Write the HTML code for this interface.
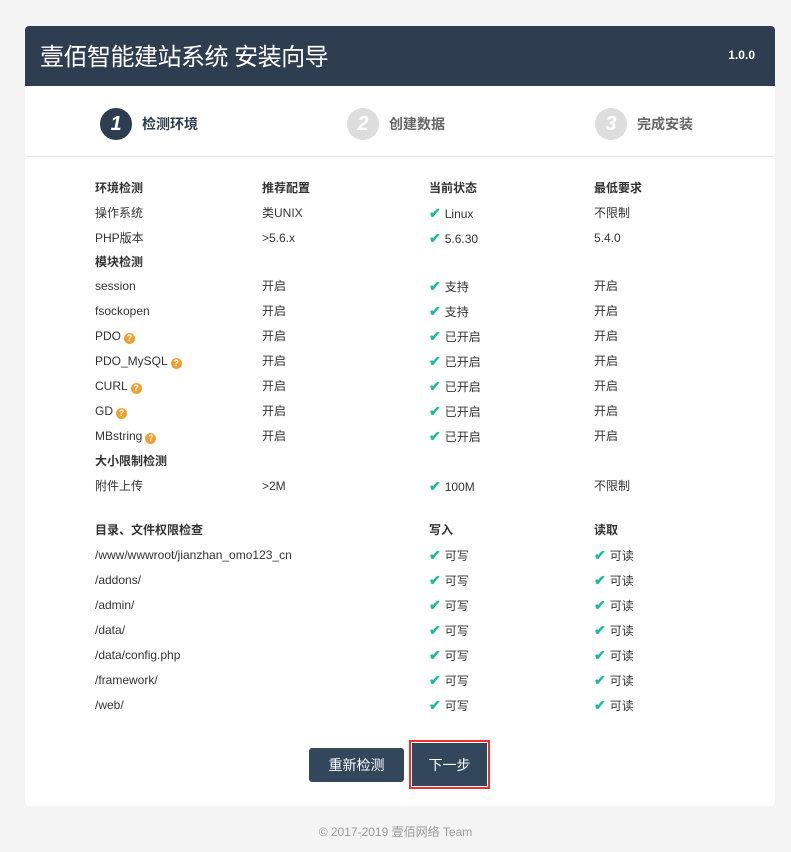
<!DOCTYPE html>
<html><head><meta charset="utf-8"><style>
*{margin:0;padding:0;box-sizing:border-box}
html,body{width:791px;height:852px;overflow:hidden}
body{background:#f4f4f4;font-family:"Liberation Sans","Noto Sans CJK SC",sans-serif;font-size:12px;color:#333;position:relative}
.card{position:absolute;left:25px;top:26px;width:750px;height:780px;background:#fff;border-radius:4px}
.hd{position:absolute;left:0;top:0;width:750px;height:60px;background:#2e3e50;border-radius:4px 4px 0 0;color:#fff}
.hd h1{position:absolute;left:15px;top:15px;font-size:24px;line-height:34px;font-weight:normal;letter-spacing:-0.5px}
.hd .v{position:absolute;right:20px;top:22px;font-size:12px;font-weight:bold}
.steps{position:absolute;left:0;top:60px;width:750px;height:71px;border-bottom:1px solid #e2e2e2}
.st{position:absolute;top:22px;height:32px;display:flex;align-items:center;font-size:14px;font-weight:bold;color:#666}
.st i{width:32px;height:32px;border-radius:50%;background:#ddd;color:#fff;font-style:italic;font-weight:bold;font-size:20px;display:flex;align-items:center;justify-content:center;margin-right:10px}
.st.a{color:#2e3e50}.st.a i{background:#2e3e50}
.r{position:absolute;left:95px;width:640px;height:18px;white-space:nowrap;line-height:18px}
.r span{position:absolute;top:0;height:18px;line-height:18px}
.c1{left:0}.c2{left:167px}.c3{left:334px}.c4{left:499px}
.b{font-weight:bold}
.ck{color:#1abc9c;font-size:14px;font-weight:bold;margin-right:4px;line-height:18px}
.q{display:inline-block;width:11px;height:11px;border-radius:50%;background:#f0a030;color:#fff;font-size:9px;font-weight:bold;text-align:center;line-height:11px;vertical-align:-1px;margin-left:3px;font-style:normal}
.btn{position:absolute;background:#33475c;color:#fff;font-size:14px;display:flex;align-items:center;justify-content:center;border-radius:3px}
.foot{position:absolute;top:823px;left:0;width:791px;text-align:center;color:#999;font-size:12px}
</style></head><body>
<div class="card">
<div class="hd"><h1>壹佰智能建站系统 安装向导</h1><span class="v">1.0.0</span></div>
<div class="steps">
<div class="st a" style="left:75px"><i>1</i>检测环境</div>
<div class="st" style="left:322px"><i>2</i>创建数据</div>
<div class="st" style="left:570px"><i>3</i>完成安装</div>
</div>
</div>

<div class="r b" style="top:179px"><span class="c1">环境检测</span><span class="c2">推荐配置</span><span class="c3">当前状态</span><span class="c4">最低要求</span></div>
<div class="r" style="top:204px"><span class="c1">操作系统</span><span class="c2">类UNIX</span><span class="c3"><b class="ck">✔</b>Linux</span><span class="c4">不限制</span></div>
<div class="r" style="top:229px"><span class="c1">PHP版本</span><span class="c2">&gt;5.6.x</span><span class="c3"><b class="ck">✔</b>5.6.30</span><span class="c4">5.4.0</span></div>
<div class="r b" style="top:253px"><span class="c1">模块检测</span></div>
<div class="r" style="top:277px"><span class="c1">session</span><span class="c2">开启</span><span class="c3"><b class="ck">✔</b>支持</span><span class="c4">开启</span></div>
<div class="r" style="top:302px"><span class="c1">fsockopen</span><span class="c2">开启</span><span class="c3"><b class="ck">✔</b>支持</span><span class="c4">开启</span></div>
<div class="r" style="top:327px"><span class="c1">PDO<i class="q">?</i></span><span class="c2">开启</span><span class="c3"><b class="ck">✔</b>已开启</span><span class="c4">开启</span></div>
<div class="r" style="top:352px"><span class="c1">PDO_MySQL<i class="q">?</i></span><span class="c2">开启</span><span class="c3"><b class="ck">✔</b>已开启</span><span class="c4">开启</span></div>
<div class="r" style="top:377px"><span class="c1">CURL<i class="q">?</i></span><span class="c2">开启</span><span class="c3"><b class="ck">✔</b>已开启</span><span class="c4">开启</span></div>
<div class="r" style="top:402px"><span class="c1">GD<i class="q">?</i></span><span class="c2">开启</span><span class="c3"><b class="ck">✔</b>已开启</span><span class="c4">开启</span></div>
<div class="r" style="top:427px"><span class="c1">MBstring<i class="q">?</i></span><span class="c2">开启</span><span class="c3"><b class="ck">✔</b>已开启</span><span class="c4">开启</span></div>
<div class="r b" style="top:452px"><span class="c1">大小限制检测</span></div>
<div class="r" style="top:477px"><span class="c1">附件上传</span><span class="c2">&gt;2M</span><span class="c3"><b class="ck">✔</b>100M</span><span class="c4">不限制</span></div>
<div class="r b" style="top:521px"><span class="c1">目录、文件权限检查</span><span class="c3">写入</span><span class="c4">读取</span></div>
<div class="r" style="top:546px"><span class="c1">/www/wwwroot/jianzhan_omo123_cn</span><span class="c3"><b class="ck">✔</b>可写</span><span class="c4"><b class="ck">✔</b>可读</span></div>
<div class="r" style="top:571px"><span class="c1">/addons/</span><span class="c3"><b class="ck">✔</b>可写</span><span class="c4"><b class="ck">✔</b>可读</span></div>
<div class="r" style="top:596px"><span class="c1">/admin/</span><span class="c3"><b class="ck">✔</b>可写</span><span class="c4"><b class="ck">✔</b>可读</span></div>
<div class="r" style="top:621px"><span class="c1">/data/</span><span class="c3"><b class="ck">✔</b>可写</span><span class="c4"><b class="ck">✔</b>可读</span></div>
<div class="r" style="top:646px"><span class="c1">/data/config.php</span><span class="c3"><b class="ck">✔</b>可写</span><span class="c4"><b class="ck">✔</b>可读</span></div>
<div class="r" style="top:671px"><span class="c1">/framework/</span><span class="c3"><b class="ck">✔</b>可写</span><span class="c4"><b class="ck">✔</b>可读</span></div>
<div class="r" style="top:696px"><span class="c1">/web/</span><span class="c3"><b class="ck">✔</b>可写</span><span class="c4"><b class="ck">✔</b>可读</span></div>

<div class="btn" style="left:309px;top:748px;width:95px;height:34px">重新检测</div>
<div style="position:absolute;left:409px;top:740px;width:81px;height:49px;border:2px solid #f03030"></div>
<div class="btn" style="left:412px;top:743px;width:75px;height:43px;border-radius:0">下一步</div>
<div class="foot">© 2017-2019 壹佰网络 Team</div>
</body></html>
